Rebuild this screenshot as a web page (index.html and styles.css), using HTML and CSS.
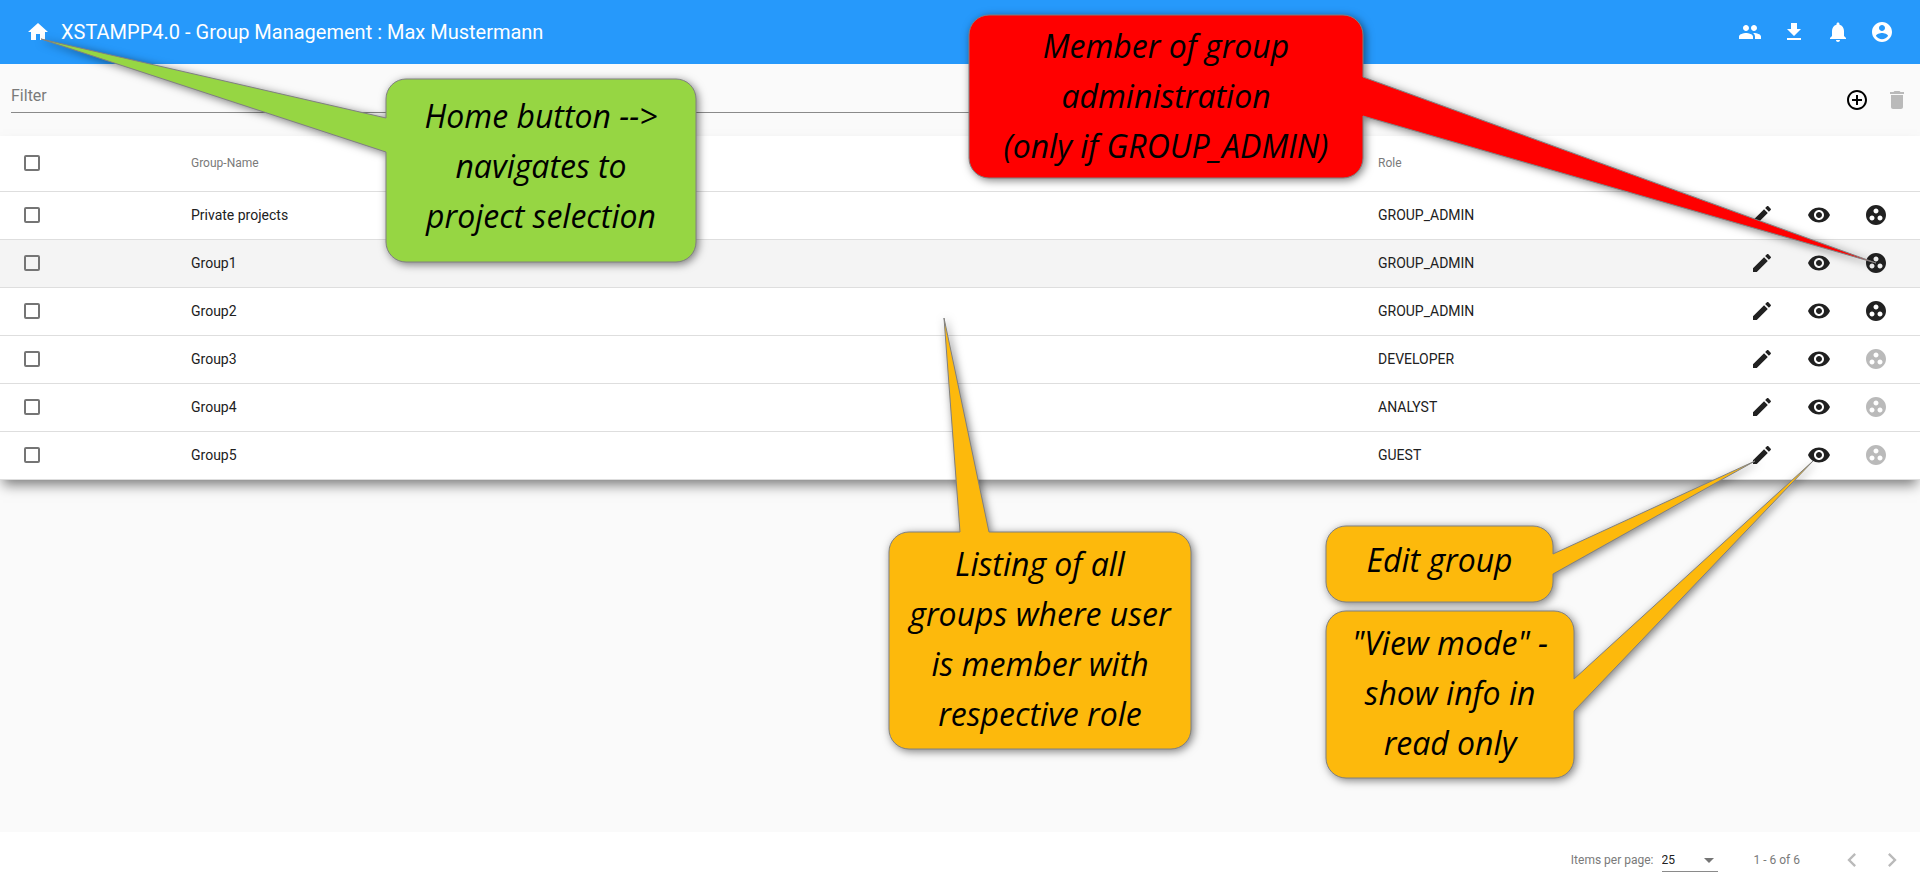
FILE: index.html
```html
<!DOCTYPE html>
<html lang="en">
<head>
<meta charset="utf-8">
<title>XSTAMPP4.0 - Group Management</title>
<link rel="stylesheet" href="styles.css">
</head>
<body>
<svg class="sprite" aria-hidden="true">
  <symbol id="edit" viewBox="0 0 24 24"><path d="M3 17.25V21h3.75L17.81 9.94l-3.75-3.75L3 17.25zM20.71 7.04c.39-.39.39-1.02 0-1.41l-2.34-2.34c-.39-.39-1.02-.39-1.41 0l-1.83 1.83 3.75 3.75 1.83-1.83z"/></symbol>
  <symbol id="view" viewBox="0 0 24 24"><path d="M12 4.5C7 4.5 2.73 7.61 1 12c1.73 4.39 6 7.5 11 7.5s9.27-3.11 11-7.5c-1.73-4.39-6-7.5-11-7.5zM12 17c-2.76 0-5-2.24-5-5s2.24-5 5-5 5 2.24 5 5-2.24 5-5 5zm0-8c-1.66 0-3 1.34-3 3s1.34 3 3 3 3-1.34 3-3-1.34-3-3-3z"/></symbol>
  <symbol id="members" viewBox="0 0 24 24"><path d="M12 2C6.48 2 2 6.48 2 12s4.48 10 10 10 10-4.48 10-10S17.52 2 12 2zM8 17.5c-1.38 0-2.5-1.12-2.5-2.5s1.12-2.5 2.5-2.5 2.5 1.12 2.5 2.5-1.12 2.5-2.5 2.5zM9.5 8c0-1.38 1.12-2.5 2.5-2.5s2.5 1.12 2.5 2.5-1.12 2.5-2.5 2.5S9.5 9.38 9.5 8zm6.5 9.5c-1.38 0-2.5-1.12-2.5-2.5s1.12-2.5 2.5-2.5 2.5 1.12 2.5 2.5-1.12 2.5-2.5 2.5z"/></symbol>
</svg>

<header class="toolbar">
  <a class="icon-button home" href="#" aria-label="Home"><svg class="icon" viewBox="0 0 24 24"><path d="M10 20v-6h4v6h5v-8h3L12 3 2 12h3v8z"/></svg></a>
  <h1 class="title">XSTAMPP4.0 - Group Management : Max Mustermann</h1>
  <nav class="toolbar-actions">
    <button class="icon-button" aria-label="Groups"><svg class="icon" viewBox="0 0 24 24"><path d="M16 11c1.66 0 2.99-1.34 2.99-3S17.66 5 16 5c-1.66 0-3 1.34-3 3s1.34 3 3 3zm-8 0c1.66 0 2.99-1.34 2.99-3S9.66 5 8 5C6.34 5 5 6.34 5 8s1.34 3 3 3zm0 2c-2.33 0-7 1.17-7 3.5V19h14v-2.5c0-2.33-4.67-3.5-7-3.5zm8 0c-.29 0-.62.02-.97.05 1.16.84 1.97 1.97 1.97 3.45V19h6v-2.5c0-2.33-4.67-3.5-7-3.5z"/></svg></button>
    <button class="icon-button" aria-label="Download"><svg class="icon" viewBox="0 0 24 24"><path d="M19 9h-4V3H9v6H5l7 7 7-7zM5 18v2h14v-2H5z"/></svg></button>
    <button class="icon-button" aria-label="Notifications"><svg class="icon" viewBox="0 0 24 24"><path d="M12 22c1.1 0 2-.9 2-2h-4c0 1.1.89 2 2 2zm6-6v-5c0-3.07-1.64-5.64-4.5-6.32V4c0-.83-.67-1.5-1.5-1.5s-1.5.67-1.5 1.5v.68C7.63 5.36 6 7.92 6 11v5l-2 2v1h16v-1l-2-2z"/></svg></button>
    <button class="icon-button" aria-label="Account"><svg class="icon" viewBox="0 0 24 24"><path d="M12 2C6.48 2 2 6.48 2 12s4.48 10 10 10 10-4.48 10-10S17.52 2 12 2zm0 3c1.66 0 3 1.34 3 3s-1.34 3-3 3-3-1.34-3-3 1.34-3 3-3zm0 14.2c-2.5 0-4.71-1.28-6-3.22.03-1.99 4-3.08 6-3.08 1.99 0 5.97 1.09 6 3.08-1.29 1.94-3.5 3.22-6 3.22z"/></svg></button>
  </nav>
</header>

<main class="content">
  <div class="filter-bar">
    <input class="filter" type="text" placeholder="Filter" aria-label="Filter">
    <div class="filter-actions">
      <button class="icon-button" aria-label="Add group"><svg class="icon" viewBox="0 0 24 24"><path d="M13 7h-2v4H7v2h4v4h2v-4h4v-2h-4V7zm-1-5C6.48 2 2 6.48 2 12s4.48 10 10 10 10-4.48 10-10S17.52 2 12 2zm0 18c-4.41 0-8-3.59-8-8s3.59-8 8-8 8 3.59 8 8-3.59 8-8 8z"/></svg></button>
      <button class="icon-button" aria-label="Delete group" disabled><svg class="icon" viewBox="0 0 24 24"><path d="M6 19c0 1.1.9 2 2 2h8c1.1 0 2-.9 2-2V7H6v12zM19 4h-3.5l-1-1h-5l-1 1H5v2h14V4z"/></svg></button>
    </div>
  </div>

  <table class="groups">
    <colgroup><col class="col-select"><col><col class="col-role"><col class="col-actions"></colgroup>
    <thead>
      <tr><th><input class="check" type="checkbox" aria-label="Select all"></th><th>Group-Name</th><th>Role</th><th></th></tr>
    </thead>
    <tbody>
      <tr>
        <td><input class="check" type="checkbox" aria-label="Select Private projects"></td><td>Private projects</td><td>GROUP_ADMIN</td>
        <td><div class="row-actions"><button class="icon-button" aria-label="Edit"><svg class="icon"><use href="#edit"/></svg></button><button class="icon-button" aria-label="View"><svg class="icon"><use href="#view"/></svg></button><button class="icon-button" aria-label="Members"><svg class="icon"><use href="#members"/></svg></button></div></td>
      </tr>
      <tr class="active">
        <td><input class="check" type="checkbox" aria-label="Select Group1"></td><td>Group1</td><td>GROUP_ADMIN</td>
        <td><div class="row-actions"><button class="icon-button" aria-label="Edit"><svg class="icon"><use href="#edit"/></svg></button><button class="icon-button" aria-label="View"><svg class="icon"><use href="#view"/></svg></button><button class="icon-button" aria-label="Members"><svg class="icon"><use href="#members"/></svg></button></div></td>
      </tr>
      <tr>
        <td><input class="check" type="checkbox" aria-label="Select Group2"></td><td>Group2</td><td>GROUP_ADMIN</td>
        <td><div class="row-actions"><button class="icon-button" aria-label="Edit"><svg class="icon"><use href="#edit"/></svg></button><button class="icon-button" aria-label="View"><svg class="icon"><use href="#view"/></svg></button><button class="icon-button" aria-label="Members"><svg class="icon"><use href="#members"/></svg></button></div></td>
      </tr>
      <tr>
        <td><input class="check" type="checkbox" aria-label="Select Group3"></td><td>Group3</td><td>DEVELOPER</td>
        <td><div class="row-actions"><button class="icon-button" aria-label="Edit"><svg class="icon"><use href="#edit"/></svg></button><button class="icon-button" aria-label="View"><svg class="icon"><use href="#view"/></svg></button><button class="icon-button" aria-label="Members" disabled><svg class="icon"><use href="#members"/></svg></button></div></td>
      </tr>
      <tr>
        <td><input class="check" type="checkbox" aria-label="Select Group4"></td><td>Group4</td><td>ANALYST</td>
        <td><div class="row-actions"><button class="icon-button" aria-label="Edit"><svg class="icon"><use href="#edit"/></svg></button><button class="icon-button" aria-label="View"><svg class="icon"><use href="#view"/></svg></button><button class="icon-button" aria-label="Members" disabled><svg class="icon"><use href="#members"/></svg></button></div></td>
      </tr>
      <tr>
        <td><input class="check" type="checkbox" aria-label="Select Group5"></td><td>Group5</td><td>GUEST</td>
        <td><div class="row-actions"><button class="icon-button" aria-label="Edit"><svg class="icon"><use href="#edit"/></svg></button><button class="icon-button" aria-label="View"><svg class="icon"><use href="#view"/></svg></button><button class="icon-button" aria-label="Members" disabled><svg class="icon"><use href="#members"/></svg></button></div></td>
      </tr>
    </tbody>
  </table>
</main>

<footer class="paginator">
  <label for="page-size">Items per page:</label>
  <div class="select-wrap">
    <select class="page-size" id="page-size"><option>25</option><option>50</option></select>
  </div>
  <span class="range">1 - 6 of 6</span>
  <div class="pager">
    <button class="icon-button" aria-label="Previous page" disabled><svg class="icon chevron" viewBox="0 0 24 24"><path d="M15.41 7.41L14 6l-6 6 6 6 1.41-1.41L10.83 12z"/></svg></button>
    <button class="icon-button" aria-label="Next page" disabled><svg class="icon chevron" viewBox="0 0 24 24"><path d="M10 6L8.59 7.41 13.17 12l-4.58 4.59L10 18l6-6z"/></svg></button>
  </div>
</footer>

<aside class="callout callout-home">
  <svg class="bubble"><path d="M20 0H290A20 20 0 0 1 310 20V163A20 20 0 0 1 290 183H20A20 20 0 0 1 0 163V73L-345 -40L0 39V20A20 20 0 0 1 20 0Z"/></svg>
  <p class="note">Home button --&gt;<br>navigates to<br>project selection</p>
</aside>
<aside class="callout callout-members">
  <svg class="bubble"><path d="M20 0H374A20 20 0 0 1 394 20V62L907 248L394 101V143A20 20 0 0 1 374 163H20A20 20 0 0 1 0 143V20A20 20 0 0 1 20 0Z"/></svg>
  <p class="note">Member of group<br>administration<br>(only if GROUP_ADMIN)</p>
</aside>
<aside class="callout callout-list">
  <svg class="bubble"><path d="M20 0H71L55 -214L100 0H282A20 20 0 0 1 302 20V197A20 20 0 0 1 282 217H20A20 20 0 0 1 0 197V20A20 20 0 0 1 20 0Z"/></svg>
  <p class="note">Listing of all<br>groups where user<br>is member with<br>respective role</p>
</aside>
<aside class="callout callout-edit">
  <svg class="bubble"><path d="M20 0H207A20 20 0 0 1 227 20V28L429 -65L227 48V56A20 20 0 0 1 207 76H20A20 20 0 0 1 0 56V20A20 20 0 0 1 20 0Z"/></svg>
  <p class="note">Edit group</p>
</aside>
<aside class="callout callout-view">
  <svg class="bubble"><path d="M20 0H228A20 20 0 0 1 248 20V68L487 -150L248 100V147A20 20 0 0 1 228 167H20A20 20 0 0 1 0 147V20A20 20 0 0 1 20 0Z"/></svg>
  <p class="note">"View mode" -<br>show info in<br>read only</p>
</aside>
</body>
</html>
```
FILE: styles.css
```css
* { box-sizing: border-box; }

body {
  position: relative;
  display: flex;
  flex-direction: column;
  min-height: 100vh;
  margin: 0;
  background: #fafafa;
  color: #212121;
  font-family: Roboto, sans-serif;
  font-size: 14px;
}

.sprite { position: absolute; width: 0; height: 0; }

.icon { display: block; width: 24px; height: 24px; fill: currentColor; }

.icon-button {
  display: flex;
  flex: none;
  align-items: center;
  justify-content: center;
  width: 40px;
  height: 40px;
  padding: 0;
  border: 0;
  background: none;
  color: inherit;
}
.icon-button:disabled { color: #bababa; }

.toolbar {
  display: flex;
  align-items: center;
  height: 64px;
  padding: 0 18px;
  background: #2699fb;
  color: #fff;
}
.title { margin: 0 0 0 3px; font-size: 20px; font-weight: 400; line-height: 32px; }
.toolbar-actions { display: flex; gap: 4px; margin-left: auto; }

.content { flex: 1; }

.filter-bar {
  display: flex;
  align-items: center;
  justify-content: space-between;
  height: 72px;
  padding: 0 3px 0 11px;
}
.filter {
  width: 60%;
  height: 33px;
  margin-bottom: 7px;
  padding: 0 0 1px;
  border: 0;
  border-bottom: 1px solid #8a8a8a;
  background: none;
  font: 16px/24px Roboto, sans-serif;
}
.filter::placeholder { color: #7a7a7a; opacity: 1; }
.filter-actions { display: flex; color: #000; }

.groups {
  width: 100%;
  border-collapse: separate;
  border-spacing: 0;
  table-layout: fixed;
  background: #fff;
  box-shadow: 0 8px 12px -3px rgba(0, 0, 0, 0.5);
}
.col-select { width: 191px; }
.col-role { width: 360px; }
.col-actions { width: 182px; }
.groups th, .groups td {
  height: 48px;
  padding: 0 0 1px;
  border-bottom: 1px solid #dedede;
  text-align: left;
}
.groups th { height: 56px; padding-bottom: 2px; color: #7a7a7a; font-size: 12px; font-weight: 400; }
.active { background: #f4f4f4; }

.check {
  display: block;
  width: 16px;
  height: 16px;
  margin: 0 0 0 24px;
  border: 2px solid #757575;
  border-radius: 2px;
  appearance: none;
}
.row-actions { display: flex; justify-content: flex-end; gap: 17px; padding-right: 24px; }

.paginator {
  display: flex;
  align-items: center;
  justify-content: flex-end;
  height: 56px;
  padding-right: 8px;
  background: #fff;
  color: #7a7a7a;
  font-size: 12px;
}
.select-wrap { position: relative; margin: 0 36px 0 8px; }
.select-wrap::after {
  content: "";
  position: absolute;
  top: 10px;
  right: 4px;
  border: 5px solid transparent;
  border-top-color: #757575;
  border-bottom: 0;
  pointer-events: none;
}
.page-size {
  display: block;
  width: 56px;
  height: 24px;
  padding: 0;
  border: 0;
  border-bottom: 1px solid #8a8a8a;
  border-radius: 0;
  background: none;
  color: #212121;
  font: 12px Roboto, sans-serif;
  appearance: none;
}
.pager { display: flex; margin-left: 32px; }
.chevron { width: 28px; height: 28px; }

/* Annotation bubbles lie over the page; each tail points at the item it explains. */
.callout {
  position: absolute;
  display: flex;
  align-items: center;
  justify-content: center;
  pointer-events: none;
}
.bubble {
  position: absolute;
  inset: 0;
  width: 100%;
  height: 100%;
  overflow: visible;
  fill: #fdb90c;
  stroke: #808080;
  stroke-width: 1px;
  filter: drop-shadow(2px 2px 4px rgba(0, 0, 0, 0.5));
}
.note {
  position: relative;
  margin: 0;
  color: #000;
  font: italic 32px/50px "Segoe Print", "Open Sans", sans-serif;
  text-align: center;
  white-space: nowrap;
}
.callout-home { left: 386px; top: 79px; width: 310px; height: 183px; padding-bottom: 10px; }
.callout-home .bubble { fill: #96d643; }
.callout-members { left: 969px; top: 15px; width: 394px; height: 163px; padding-bottom: 2px; }
.callout-members .bubble { fill: #f00; }
.callout-list { left: 889px; top: 532px; width: 302px; height: 217px; padding-bottom: 4px; }
.callout-edit { left: 1326px; top: 526px; width: 227px; height: 76px; padding-bottom: 8px; }
.callout-view { left: 1326px; top: 611px; width: 248px; height: 167px; padding-bottom: 4px; }
```
